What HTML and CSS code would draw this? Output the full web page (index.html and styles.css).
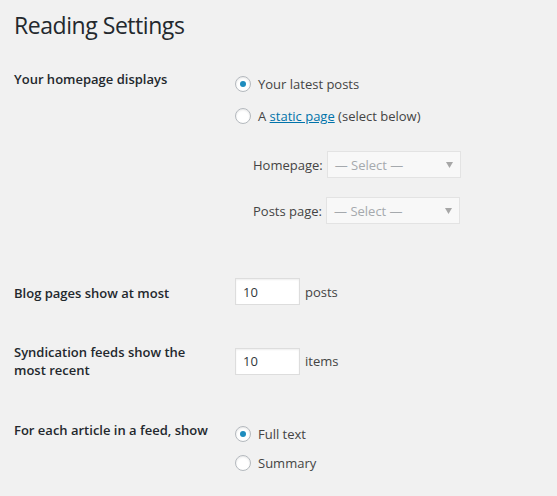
FILE: index.html
```html
<!DOCTYPE html>
<html>
<head>
<meta charset="utf-8">
<link rel="stylesheet" href="styles.css">
</head>
<body>
<div class="wrap">
  <h1 class="title">Reading Settings</h1>
  <div class="form">
    <div class="row row-front">
      <div class="th">Your homepage displays</div>
      <div class="td">
        <label class="opt"><span class="radio checked"></span><span>Your latest posts</span></label>
        <label class="opt opt-gap"><span class="radio"></span><span>A <a href="#" class="link">static page</a> (select below)</span></label>
        <ul class="pages">
          <li class="page-item"><span class="page-label">Homepage:</span><span class="select"><span class="select-text">— Select —</span><svg class="arrow" width="7" height="6" viewBox="0 0 7 6"><path d="M0 0H7L3.5 6Z" fill="#a7a7a7"/></svg></span></li>
          <li class="page-item page-item-2"><span class="page-label">Posts page:</span><span class="select"><span class="select-text">— Select —</span><svg class="arrow" width="7" height="6" viewBox="0 0 7 6"><path d="M0 0H7L3.5 6Z" fill="#a7a7a7"/></svg></span></li>
        </ul>
      </div>
    </div>
    <div class="row row-blog">
      <div class="th th-blog">Blog pages show at most</div>
      <div class="td td-blog">
        <span class="num">10</span><span class="unit">posts</span>
      </div>
    </div>
    <div class="row row-feed">
      <div class="th">Syndication feeds show the most recent</div>
      <div class="td td-feed">
        <span class="num">10</span><span class="unit">items</span>
      </div>
    </div>
    <div class="row row-article">
      <div class="th">For each article in a feed, show</div>
      <div class="td td-article">
        <label class="opt"><span class="radio checked"></span><span>Full text</span></label>
        <label class="opt opt-gap-small"><span class="radio"></span><span>Summary</span></label>
      </div>
    </div>
  </div>
</div>
</body>
</html>
```
FILE: styles.css
```css
html, body {
  margin: 0;
  padding: 0;
  background: #f1f1f1;
}
body {
  font-family: "Open Sans", "Noto Sans", sans-serif;
  font-size: 13px;
  color: #444;
}
.wrap {
  padding-left: 14px;
}
.title {
  margin: 0;
  padding-top: 10px;
  font-size: 23px;
  line-height: 30px;
  font-weight: 400;
  letter-spacing: -0.45px;
  color: #23282d;
}
.form {
  margin-top: 10px;
}
.row {
  display: flex;
  align-items: flex-start;
}
.th {
  width: 200px;
  padding: 20px 10px 0 0;
  font-weight: 600;
  color: #23282d;
  line-height: 18px;
  flex: none;
}
.td {
  padding: 24px 10px 0 11px;
  flex: 1;
}
.row-front .td {
  padding-bottom: 39px;
}
.opt {
  display: flex;
  align-items: center;
  height: 20px;
  line-height: 20px;
}
.opt-gap {
  margin-top: 12px;
}
.opt-gap-small {
  margin-top: 9px;
}
.radio {
  width: 14px;
  height: 14px;
  border: 1px solid #b4b9be;
  border-radius: 50%;
  background: #fff;
  box-shadow: inset 0 1px 2px rgba(0,0,0,.1);
  margin-right: 7px;
  display: flex;
  align-items: center;
  justify-content: center;
  flex: none;
}
.radio.checked::before {
  content: "";
  width: 6px;
  height: 6px;
  border-radius: 50%;
  background: #1e8cbe;
}
.link {
  color: #0073aa;
  text-decoration: underline;
}
.pages {
  list-style: none;
  margin: 25px 0 0;
  padding: 0 0 0 18px;
}
.page-item {
  display: flex;
  align-items: center;
  height: 27px;
}
.page-item-2 {
  margin-top: 19px;
}
.page-label {
  margin-right: 4px;
}
.select {
  display: flex;
  align-items: center;
  justify-content: space-between;
  box-sizing: border-box;
  width: 134px;
  height: 27px;
  padding: 0 7px 0 7px;
  background: #f8f8f8;
  border: 1px solid #e3e3e3;
  color: #a5a9ad;
}
.arrow {
  display: block;
}
.row-blog .th {
  padding-top: 21px;
}
.td-blog, .td-feed {
  display: flex;
  align-items: center;
  padding-top: 15px;
}
.td-blog {
  padding-bottom: 18px;
}
.row-feed {
  align-items: center;
}
.row-feed .th {
  padding-bottom: 20px;
}
.td-feed {
  padding-top: 0;
}
.num {
  box-sizing: border-box;
  width: 65px;
  height: 27px;
  padding-left: 7px;
  display: flex;
  align-items: center;
  background: #fff;
  border: 1px solid #ddd;
  box-shadow: inset 0 1px 2px rgba(0,0,0,.07);
  color: #32373c;
}
.unit {
  margin-left: 5px;
}
.row-article {
  margin-top: 2px;
}
.td-article {
  padding-top: 23px;
}
```
